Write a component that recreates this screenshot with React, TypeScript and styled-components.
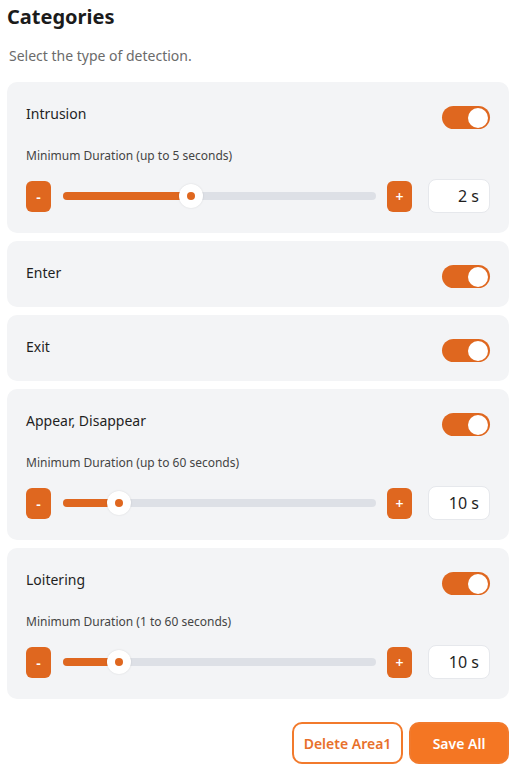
import React from "react";
import styled, { createGlobalStyle } from "styled-components";

const GlobalStyle = createGlobalStyle`
  html, body { margin: 0; padding: 0; background: #ffffff; }
  body { font-family: "Noto Sans", "Open Sans", sans-serif; -webkit-font-smoothing: antialiased; }
  * { box-sizing: border-box; }
`;

const ORANGE = "#DF671F";

const Page = styled.div`
  width: 516px;
  padding: 3px 7px 0 7px;
  display: flex;
  flex-direction: column;
`;

const Title = styled.h1`
  margin: 0;
  font-size: 20px;
  line-height: 28px;
  font-weight: 700;
  color: #1b1b1b;
`;

const Subtitle = styled.p`
  margin: 15px 0 0 2px;
  font-size: 14px;
  line-height: 20px;
  color: #6b6b6b;
`;

const CardList = styled.div`
  margin-top: 16px;
  display: flex;
  flex-direction: column;
  gap: 8px;
`;

const Card = styled.section<{ $expanded: boolean }>`
  background: #f3f4f6;
  border-radius: 10px;
  padding: 24px 19px 0 19px;
  padding-bottom: ${(p) => (p.$expanded ? "20px" : "19px")};
  display: flex;
  flex-direction: column;
`;

const Header = styled.div`
  display: flex;
  justify-content: space-between;
  align-items: flex-start;
  height: 23px;
`;

const Label = styled.span`
  margin-top: -2px;
  font-size: 14px;
  line-height: 20px;
  font-weight: 400;
  color: #1f1f1f;
`;

const Toggle = styled.div`
  width: 48px;
  height: 23px;
  border-radius: 12px;
  background: ${ORANGE};
  display: flex;
  align-items: center;
  justify-content: flex-end;
  padding: 0 2px;
`;

const Knob = styled.div`
  width: 20px;
  height: 20px;
  border-radius: 50%;
  background: #ffffff;
`;

const DurationLabel = styled.div`
  margin-top: 19px;
  font-size: 12px;
  line-height: 16px;
  color: #444;
`;

const SliderRow = styled.div`
  margin-top: 15px;
  height: 34px;
  display: flex;
  align-items: center;
`;

const StepButton = styled.button`
  width: 25px;
  height: 31px;
  border: none;
  border-radius: 6px;
  background: ${ORANGE};
  color: #ffffff;
  font-family: "Noto Sans", sans-serif;
  font-size: 14px;
  font-weight: 600;
  padding: 0;
  display: flex;
  align-items: center;
  justify-content: center;
  flex: none;
`;

const Track = styled.div`
  position: relative;
  flex: 1;
  height: 8px;
  border-radius: 4px;
  background: #dde0e6;
  margin: 0 11px 0 12px;
`;

const Fill = styled.div`
  position: absolute;
  left: 0;
  top: 0;
  height: 8px;
  border-radius: 4px;
  background: ${ORANGE};
`;

const Thumb = styled.div`
  position: absolute;
  top: 50%;
  width: 24px;
  height: 24px;
  margin-top: -12px;
  border-radius: 50%;
  background: #ffffff;
  box-shadow: 0 0 2px rgba(0, 0, 0, 0.12);
  display: flex;
  align-items: center;
  justify-content: center;
  &::after {
    content: "";
    width: 8px;
    height: 8px;
    border-radius: 50%;
    background: ${ORANGE};
  }
`;

const ValueBox = styled.div`
  margin-left: 16px;
  width: 62px;
  height: 34px;
  flex: none;
  background: #ffffff;
  border: 1px solid #e6e8ec;
  border-radius: 8px;
  display: flex;
  align-items: center;
  justify-content: flex-end;
  padding-right: 10px;
  font-size: 16px;
  color: #1f1f1f;
`;

const Footer = styled.div`
  margin-top: 23px;
  display: flex;
  justify-content: flex-end;
  gap: 6px;
`;

const ActionButton = styled.button<{ $primary?: boolean }>`
  height: 42px;
  width: ${(p) => (p.$primary ? "100px" : "111px")};
  border-radius: 10px;
  border: 2px solid #f27a2c;
  background: ${(p) => (p.$primary ? "#F47623" : "#ffffff")};
  color: ${(p) => (p.$primary ? "#ffffff" : "#E8702A")};
  font-family: "Noto Sans", sans-serif;
  font-size: 14px;
  font-weight: 600;
  padding: 0;
`;

type Slider = { label: string; value: number; min: number; max: number };
type Category = { name: string; slider?: Slider };

const categories: Category[] = [
  { name: "Intrusion", slider: { label: "Minimum Duration (up to 5 seconds)", value: 2, min: 0, max: 5 } },
  { name: "Enter" },
  { name: "Exit" },
  { name: "Appear, Disappear", slider: { label: "Minimum Duration (up to 60 seconds)", value: 10, min: 1, max: 60 } },
  { name: "Loitering", slider: { label: "Minimum Duration (1 to 60 seconds)", value: 10, min: 1, max: 60 } },
];

function DurationSlider({ s }: { s: Slider }) {
  const f = (s.value - s.min) / (s.max - s.min);
  return (
    <>
      <DurationLabel>{s.label}</DurationLabel>
      <SliderRow>
        <StepButton>-</StepButton>
        <Track>
          <Fill style={{ width: `calc(${f} * (100% - 24px) + 12px)` }} />
          <Thumb style={{ left: `calc(${f} * (100% - 24px))` }} />
        </Track>
        <StepButton>+</StepButton>
        <ValueBox>{s.value} s</ValueBox>
      </SliderRow>
    </>
  );
}

export default function App() {
  return (
    <>
      <GlobalStyle />
      <Page>
        <Title>Categories</Title>
        <Subtitle>Select the type of detection.</Subtitle>
        <CardList>
          {categories.map((c) => (
            <Card key={c.name} $expanded={!!c.slider}>
              <Header>
                <Label>{c.name}</Label>
                <Toggle>
                  <Knob />
                </Toggle>
              </Header>
              {c.slider && <DurationSlider s={c.slider} />}
            </Card>
          ))}
        </CardList>
        <Footer>
          <ActionButton>Delete Area1</ActionButton>
          <ActionButton $primary>Save All</ActionButton>
        </Footer>
      </Page>
    </>
  );
}
